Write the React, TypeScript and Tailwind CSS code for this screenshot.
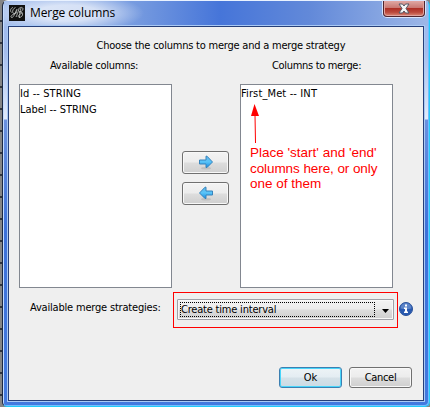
import type { ReactNode } from 'react';

const uiFont = "font-['DejaVu_Sans_Condensed','DejaVu_Sans',sans-serif] [font-stretch:condensed]";

function Logo() {
  return (
    <svg className="size-4 shrink-0" viewBox="0 0 16 16" fill="none">
      <path d="M0 0h16v16H0z" fill="#101111" />
      <path
        d="M4 2.500C1.500 3 .8 6 2.500 7.500M6.500 2.500C4 3.500 3 6 4 8c1 1.500 3 0 4-3M8 4C6 8 5 12 3 12.500c-2 0-1-2 1-3l4-2M10 4c-1 3-2 6-3 8M9 4.500c2-3 5-2.500 5-.5s-3 3-4 3c3-.5 4 1 3.500 3-.5 2-3 3-4 2s1-3 4-4M12 3c-1 3-1.500 7-1.500 10"
        stroke="#c6cac8"
        strokeWidth=".8"
      />
    </svg>
  );
}

function Arrow({ left = false }: { left?: boolean }) {
  return (
    <svg className="h-[15px] w-4" viewBox="0 0 16 15">
      <defs>
        <linearGradient id="arrowBlue" x2="0" y2="1">
          <stop stopColor="#5fb6ea" />
          <stop offset=".5" stopColor="#5ac4f8" />
          <stop offset="1" stopColor="#168ade" />
        </linearGradient>
      </defs>
      <ellipse cx="8" cy="13.200" rx="5" ry="1.200" fill="#999" opacity=".35" />
      <path
        d="M1.500 5h6.500v-3.800h1L14.500 7 9 12.500H8V9H1.500z"
        fill="url(#arrowBlue)"
        stroke="#3684bd"
        transform={left ? 'matrix(-1 0 0 1 16 0)' : undefined}
      />
    </svg>
  );
}

function Button({ children, className }: { children: ReactNode; className: string }) {
  return (
    <button className={`flex items-center justify-center rounded-[3px] border ${className}`}>
      {children}
    </button>
  );
}

const grayFace = 'bg-[linear-gradient(#f3f3f3_0%,#ececec_48%,#dddddd_52%,#cfcfcf_100%)] border-[#707070] shadow-[inset_0_0_0_1px_#f8f8f8]';
const focusFace = 'bg-[linear-gradient(#edf3f6_0%,#e4edf2_48%,#d5e1e8_52%,#cbdbe4_100%)] border-[#3c7fb1] shadow-[inset_0_0_0_1px_#48d5fa]';

type Item = { text: string; tracking: string };

function ColumnList({ title, titleClass, items, children }: { title: string; titleClass: string; items: Item[]; children?: ReactNode }) {
  return (
    <section className="flex w-[153px] shrink-0 flex-col">
      <h2 className={`h-[25px] leading-[14px] ${titleClass}`}>{title}</h2>
      <div className="h-[204px] border border-[#828790] bg-white pt-px">
        {items.map((item) => (
          <div key={item.text} className={`h-4 leading-4 ${item.tracking}`}>{item.text}</div>
        ))}
        {children}
      </div>
    </section>
  );
}

export default function App() {
  return (
    <div className={`flex h-[407px] w-[430px] overflow-hidden bg-[repeating-linear-gradient(#858585_0_20px,#30343c_20px_22px)] pl-0.5 text-[11px] whitespace-nowrap text-black ${uiFont}`}>
      <main className="flex w-[428px] flex-col rounded-t-[6px] rounded-b-[5px] border border-t-[#e9f2ff] border-r-[#20cbfa] border-b-[#20cbfa] border-l-[#1b2843] bg-[linear-gradient(#9cb9ef_0px,#a4bcec_50px,#e2ebfb_118px,#6b91df_119px,#3d71d9_230px,#4379df_100%)] px-[5px] pb-[5px] shadow-[inset_1px_1px_0_#c4dcff,inset_-1px_-1px_0_#6fbfff]">
        <header className="-mx-[4px] flex h-[25px] shrink-0 items-start bg-[radial-gradient(ellipse_76px_20px_at_64px_12px,rgba(255,255,255,.65)_40%,transparent_100%),linear-gradient(90deg,#a5bfec,#7499df_32%,#4675d9_51%,#6289d9_72%,#9db7e7)] pl-[5px]">
          <div className="mt-1"><Logo /></div>
          <h1 className="mt-[3px] ml-[5px] font-['Open_Sans','Noto_Sans',sans-serif] text-[12px] leading-[18px] tracking-[-0.1px] [font-stretch:normal]">Merge columns</h1>
          <button aria-label="Close" className="mr-[3px] ml-auto flex h-4 w-[42px] items-center justify-center rounded-b-[4px] border border-t-0 border-[#50252e] bg-[linear-gradient(#dfa9a4_0%,#c97872_45%,#ae3026_50%,#bb493d_75%,#db8a77_100%)] shadow-[0_0_0_1px_#d7e4fb,inset_0_0_0_1px_#e0a39f]">
            <svg className="h-[11px] w-3" viewBox="0 0 12 11"><path d="M1 1h3.500L6 3l1.500-2H11L8 5.500 11 10H7.500L6 8l-1.500 2H1l3-4.500z" fill="#f5f5f5" stroke="#535966" /></svg>
          </button>
        </header>
        <div className="flex h-[375px] w-[416px] flex-col border border-[#263f79] bg-[#efefef] shadow-[0_0_0_1px_#a9c9f5]">
          <p className="mt-3 ml-[87.500px] h-[14px] leading-[14px] tracking-[-0.22px]">Choose the columns to merge and a merge strategy</p>
          <div className="mt-[6px] flex pl-[10px]">
            <ColumnList
              title="Available columns:"
              titleClass="pl-[31px] tracking-[-0.26px]"
              items={[{ text: 'Id -- STRING', tracking: 'tracking-[0.1px]' }, { text: 'Label -- STRING', tracking: 'tracking-[-0.05px]' }]}
            />
            <div className="mt-[92px] flex w-[68px] flex-col gap-2 pl-[10px]">
              <Button className={`h-[23px] w-[47px] ${grayFace}`}><Arrow /></Button>
              <Button className={`h-[23px] w-[47px] ${grayFace}`}><Arrow left /></Button>
            </div>
            <ColumnList
              title="Columns to merge:"
              titleClass="pl-[32px] tracking-[-0.32px]"
              items={[{ text: 'First_Met -- INT', tracking: 'tracking-[0.13px]' }]}
            >
              <svg className="mt-[2px] ml-[10px] h-[40px] w-2" viewBox="0 0 8 40">
                <path d="m4.500 39-.5-28" stroke="#f00" />
                <path d="M3.500 0 8 12H0z" fill="#f00" />
              </svg>
              <p className="ml-[9px] pt-px font-['Liberation_Sans',Arial,sans-serif] text-[13.5px] leading-[15.5px] text-[#f00]">Place 'start' and 'end'<br /><span className="tracking-[-0.08px]">columns here, or only</span><br />one of them</p>
            </ColumnList>
          </div>
          <div className="mt-1 flex">
            <span className="mt-[9px] w-[144px] pl-[21px] leading-[14px] tracking-[-0.19px]">Available merge strategies:</span>
            <div className="ml-[20px] h-[36px] w-[225px] border border-[#f00] px-[3px] pt-[6px]">
              <div className="flex h-[21px] items-center rounded-[1px] border border-[#a0a0a7] bg-[linear-gradient(#f3f3f3_0%,#ececec_48%,#dddddd_52%,#cfcfcf_100%)] pl-0.5 shadow-[inset_0_0_0_1px_#f8f8f8]">
                <div className="h-[15px] w-[195px] border border-dotted border-black leading-[14px] tracking-[-0.2px]">Create time interval</div>
                <svg className="mt-[3px] ml-[7px] h-1 w-[7px]" viewBox="0 0 7 4"><path d="M0 0h7L3.500 4z" /></svg>
              </div>
            </div>
            <svg className="mt-[10px] ml-px size-[14px]" viewBox="0 0 14 14">
              <circle cx="7" cy="7" r="6.500" fill="#2859b0" stroke="#2a529a" />
              <path d="M1.500 6.500a5.500 5.500 0 0 1 11 0Q7 8 1.500 6.500z" fill="#5c84c8" />
              <path d="M6 2.500h2v2H6zM5 5.500h3v4h1V11H5V9.500h1V7H5z" fill="#fff" />
            </svg>
          </div>
          <div className="mt-[39px] mr-[11px] flex justify-end gap-[7px]">
            <Button className={`h-[21px] w-[63px] pt-0.5 ${focusFace}`}>Ok</Button>
            <Button className={`h-[21px] w-[63px] pt-0.5 tracking-[-0.3px] ${grayFace}`}>Cancel</Button>
          </div>
        </div>
      </main>
    </div>
  );
}
